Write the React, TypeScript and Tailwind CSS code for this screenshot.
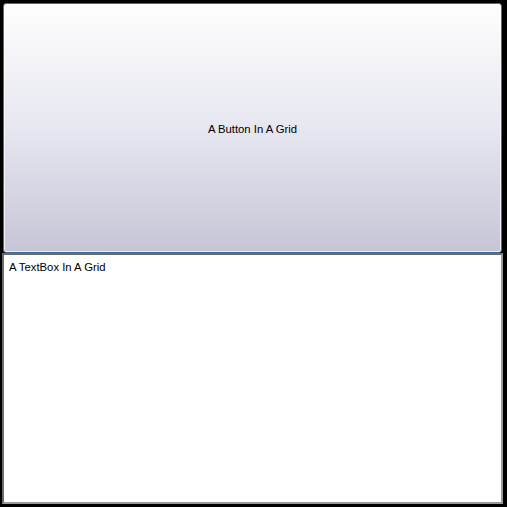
import React from 'react';

export default function App() {
  return (
    <div className="w-[507px] h-[507px] bg-black pl-[2px] pt-[3px] pr-[4px] pb-[3px] flex flex-col font-['Liberation_Sans',sans-serif] text-[11.3px] text-black">
      {/* Button row */}
      <div className="h-[250px] px-[1px] flex">
        <button className="flex-1 rounded-[3px] border border-[#3c6f9c] bg-gradient-to-b from-[#fefefe] via-[#e6e7f0] to-[#c6c5d7] shadow-[inset_0_0_0_1px_rgba(255,255,255,0.7)] flex items-center justify-center pt-[2px]">
          A Button In A Grid
        </button>
      </div>
      {/* TextBox row */}
      <div className="flex-1 flex">
        <div className="flex-1 bg-white border-2 border-t-[#6b6b6b] border-l-[#6b6b6b] border-r-[#9a9a9a] border-b-[#9a9a9a] px-[5px] pt-[4px]">
          A TextBox In A Grid
        </div>
      </div>
    </div>
  );
}
